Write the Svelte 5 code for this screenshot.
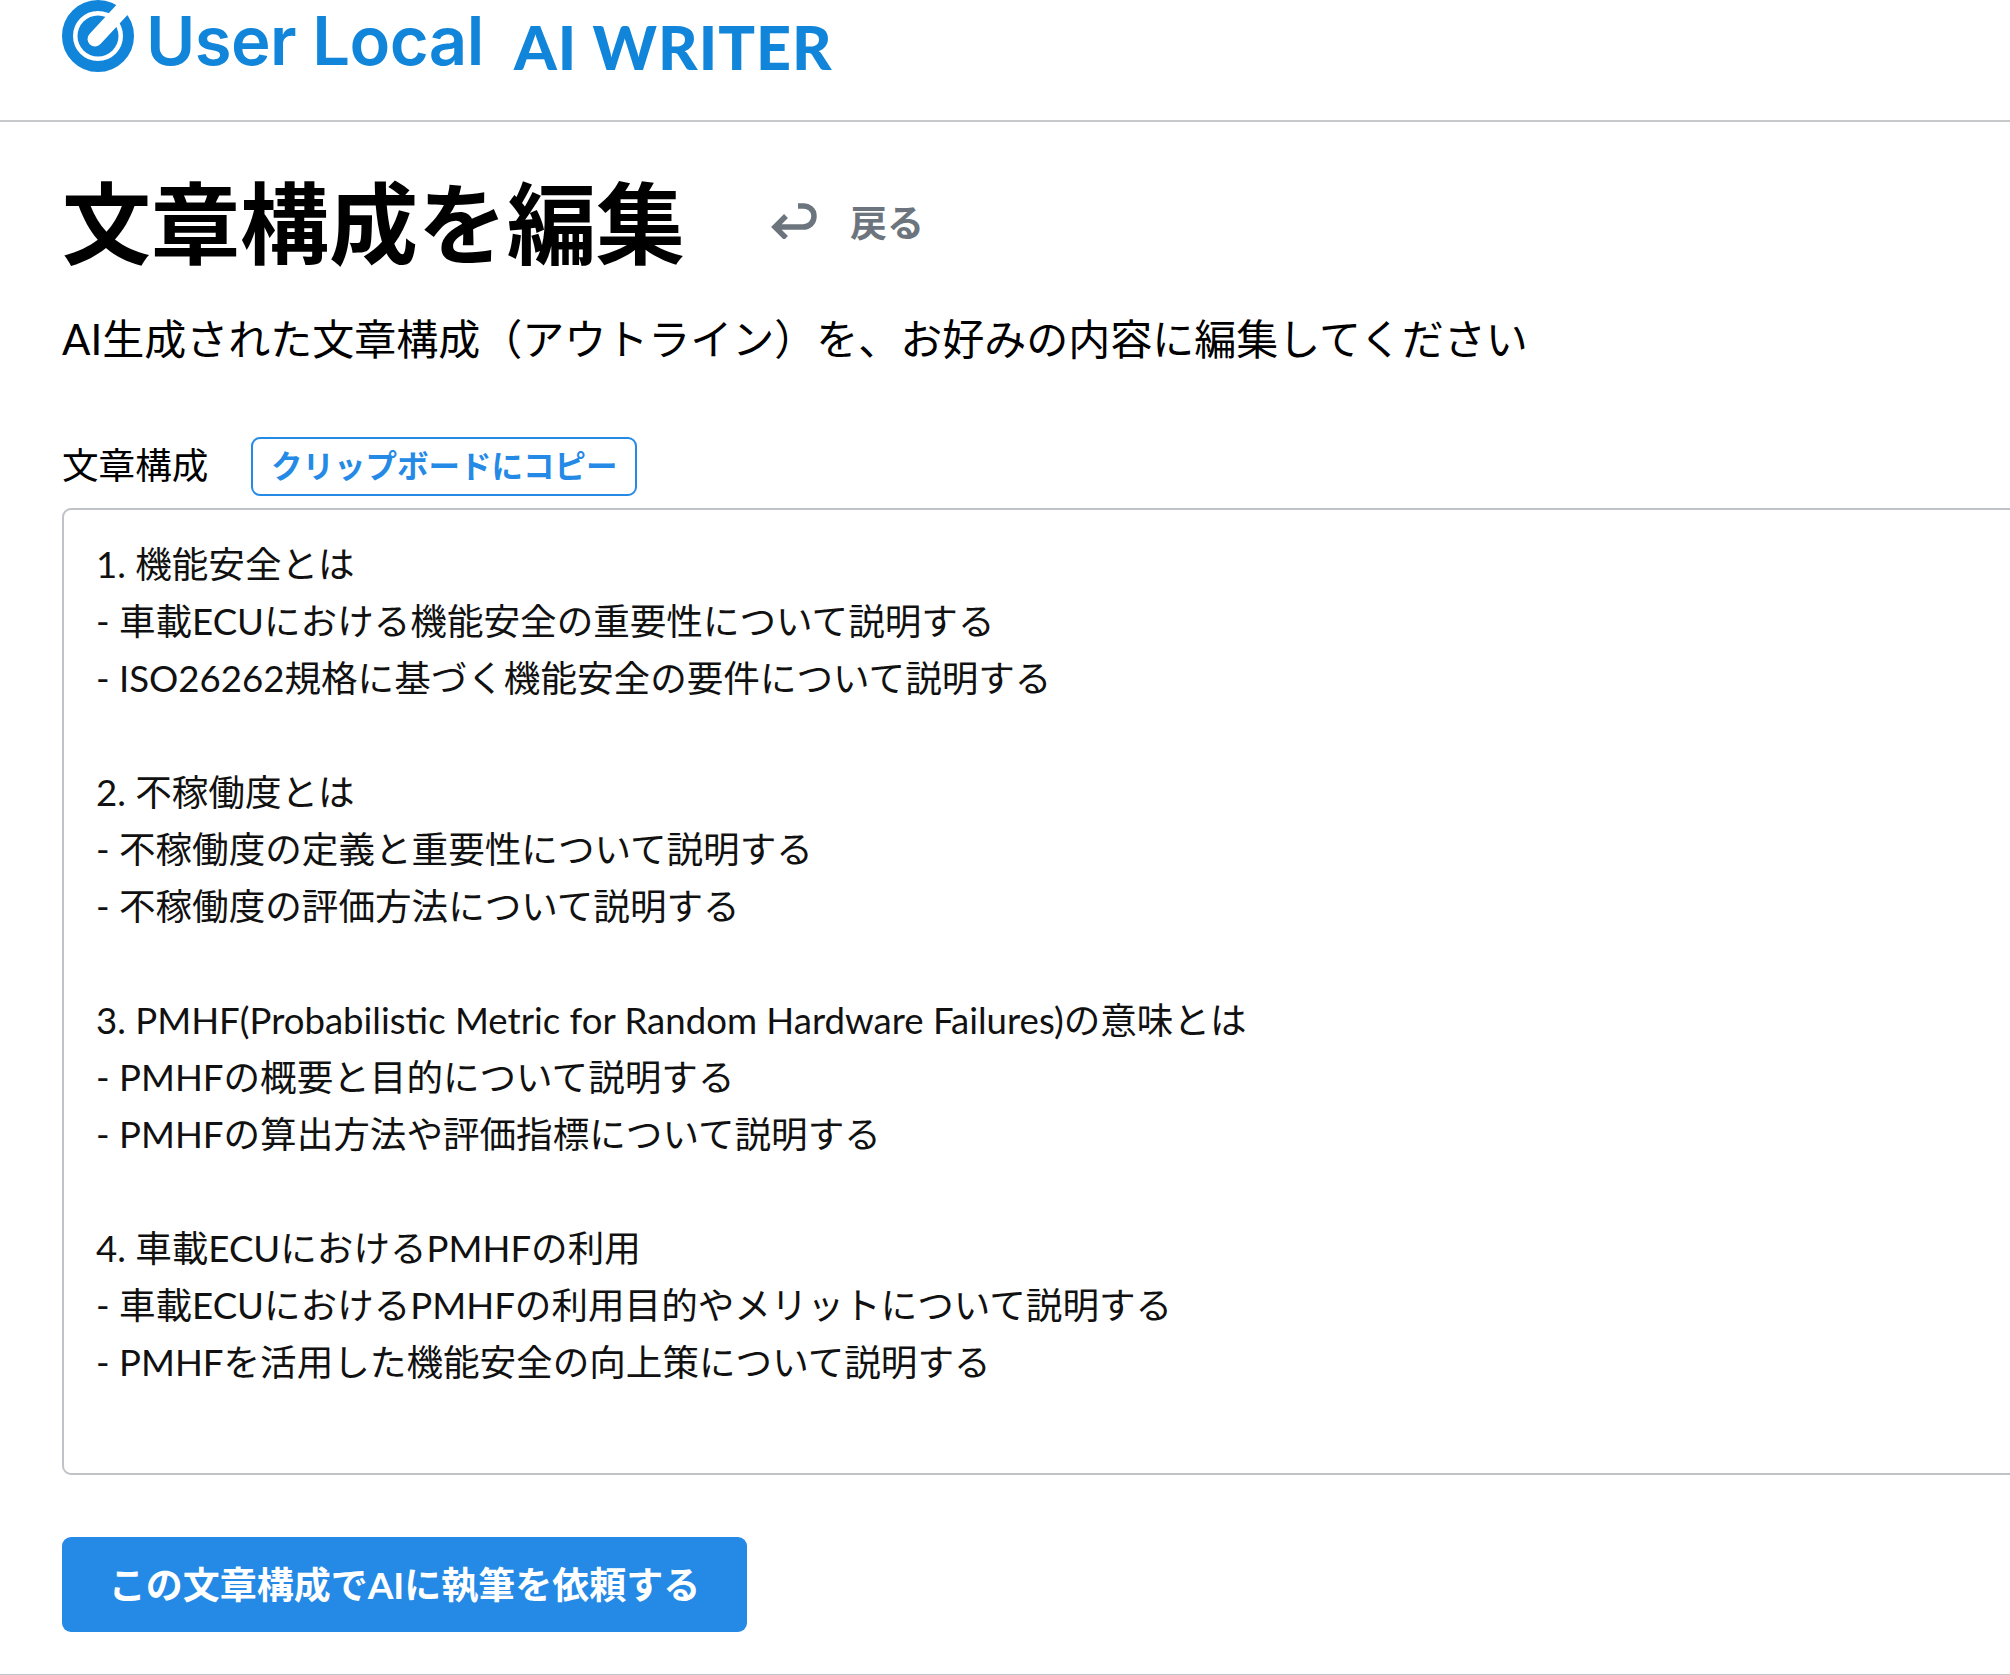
<script lang="ts">
const outline = `1. 機能安全とは
- 車載ECUにおける機能安全の重要性について説明する
- ISO26262規格に基づく機能安全の要件について説明する

2. 不稼働度とは
- 不稼働度の定義と重要性について説明する
- 不稼働度の評価方法について説明する

3. PMHF(Probabilistic Metric for Random Hardware Failures)の意味とは
- PMHFの概要と目的について説明する
- PMHFの算出方法や評価指標について説明する

4. 車載ECUにおけるPMHFの利用
- 車載ECUにおけるPMHFの利用目的やメリットについて説明する
- PMHFを活用した機能安全の向上策について説明する
`;

let text = $state(outline);

function copyOutline() {
  navigator.clipboard?.writeText(text);
}
</script>

<div class="page">
  <header class="site-header">
    <a class="brand" href="#top">
      <svg class="brand-mark" viewBox="0 0 72 72" aria-hidden="true">
        <circle cx="36" cy="36" r="30.5" fill="none" stroke="#1185d9" stroke-width="11" />
        <circle cx="36" cy="36" r="20.5" fill="#1185d9" />
        <path d="M33 39L72 -3" fill="none" stroke="#fff" stroke-width="15" stroke-linecap="round" />
      </svg>
      <span class="brand-name">User Local</span>
      <span class="brand-product">AI WRITER</span>
    </a>
  </header>

  <main class="content">
    <div class="title-row">
      <h1>文章構成を編集</h1>
      <a class="back-link" href="#top">
        <svg viewBox="0 0 46 36" aria-hidden="true">
          <path d="M27 3H33C37 3 43 6 43 13C43 20 38 24 32 24H5M15 13L4 24L15 35" fill="none" stroke="#6c757d" stroke-width="5.5" />
        </svg>
        <span>戻る</span>
      </a>
    </div>
    <p class="lead">AI生成された文章構成（アウトライン）を、お好みの内容に編集してください</p>

    <div class="field-head">
      <label for="outline">文章構成</label>
      <button type="button" class="copy-btn" onclick={copyOutline}>クリップボードにコピー</button>
    </div>
    <textarea id="outline" bind:value={text} spellcheck="false"></textarea>

    <button type="button" class="submit-btn">この文章構成でAIに執筆を依頼する</button>
  </main>
  <div class="page-end"></div>
</div>

<style>
:global(body) {
  margin: 0;
  background: #fff;
  overflow: hidden;
}

.page {
  width: 2010px;
  height: 1675px;
  overflow: hidden;
  color: #000;
  font-family: Lato, "Noto Sans CJK JP", sans-serif;
}

.site-header {
  height: 120px;
  border-bottom: 2px solid #c6c8ca;
  padding-left: 62px;
}

.brand {
  display: flex;
  align-items: flex-start;
  color: #1185d9;
  text-decoration: none;
}

.brand-mark {
  width: 72px;
  height: 72px;
  flex: none;
}

.brand-name {
  width: 338px;
  margin-left: 12px;
  font-family: Inter, sans-serif;
  font-size: 67px;
  line-height: 82px;
  font-weight: 600;
  letter-spacing: -0.6px;
  white-space: nowrap;
}

.brand-product {
  margin: 7px 0 0 30px;
  font-family: Lato, sans-serif;
  font-size: 61px;
  line-height: 80px;
  font-weight: 900;
  letter-spacing: 1px;
  white-space: nowrap;
}

.content {
  padding: 41px 0 0 62px;
}

.title-row {
  display: flex;
  align-items: center;
  gap: 86px;
}

h1 {
  margin: 0;
  font-size: 89px;
  line-height: 120px;
  font-weight: 700;
}

.back-link {
  display: flex;
  align-items: center;
  gap: 33px;
  margin-top: -4px;
  color: #6c757d;
  font-size: 37px;
  font-weight: 700;
  text-decoration: none;
}

.back-link svg {
  width: 46px;
  height: 36px;
}

.lead {
  margin: 25px 0 0;
  font-size: 42px;
  line-height: 62px;
}

.field-head {
  display: flex;
  align-items: center;
  gap: 43px;
  margin-top: 67px;
}

label {
  margin-bottom: 6px;
  font-size: 36.6px;
}

.copy-btn {
  width: 386px;
  height: 59px;
  padding: 0 0 5px;
  border: 2px solid #258ae6;
  border-radius: 9px;
  background: #fff;
  color: #258ae6;
  font: 700 31.5px Lato, "Noto Sans CJK JP", sans-serif;
}

textarea {
  display: block;
  box-sizing: border-box;
  width: 2100px;
  height: 967px;
  margin-top: 12px;
  padding: 26px 32px 12px;
  border: 2px solid #bfc3c8;
  border-radius: 9px;
  outline: none;
  resize: none;
  color: #111;
  font: 400 36.6px/57px Lato, "Noto Sans CJK JP", sans-serif;
}

.submit-btn {
  display: block;
  width: 685px;
  height: 95px;
  margin-top: 62px;
  padding: 0 0 4px;
  border: 0;
  border-radius: 9px;
  background: #258ae6;
  color: #fff;
  font: 700 37px Lato, "Noto Sans CJK JP", sans-serif;
}

.page-end {
  margin-top: 42px;
  border-top: 1px solid #bfc6cc;
}
</style>
